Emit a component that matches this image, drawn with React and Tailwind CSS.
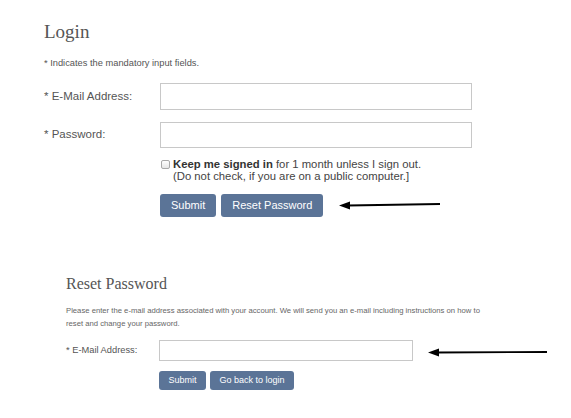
import React from "react";

const SANS = { fontFamily: '"Liberation Sans", Arial, sans-serif' };
const SERIF = { fontFamily: '"Liberation Serif", "Times New Roman", serif' };

const Arrow = ({ x1, y1, x2, y2 }) => (
  <svg
    className="absolute left-0 top-0 pointer-events-none"
    width="571"
    height="418"
    viewBox="0 0 571 418"
  >
    <line x1={x1 + 9} y1={y1} x2={x2} y2={y2} stroke="#000" strokeWidth="1.8" />
    <polygon points={`${x1},${y1} ${x1 + 11},${y1 - 4} ${x1 + 11},${y1 + 4}`} fill="#000" />
  </svg>
);

const Button = ({ children, small }) => (
  <button
    className={
      small
        ? "h-[19px] px-[9.5px] rounded-[3px] bg-[#5b7497] text-white text-[9px] leading-none"
        : "h-[23px] px-[11px] rounded-[3px] bg-[#5b7497] text-white text-[11px] leading-none"
    }
    style={SANS}
  >
    {children}
  </button>
);

export default function App() {
  return (
    <div className="relative w-[571px] h-[418px] bg-white overflow-hidden" style={SANS}>
      {/* Login form */}
      <div className="flex flex-col pl-[44px] pt-[20px]">
        <h1 className="text-[19px] leading-[24px] text-[#555]" style={SERIF}>
          Login
        </h1>
        <p className="mt-[13px] text-[9.3px] leading-[12px] text-[#555]">
          * Indicates the mandatory input fields.
        </p>

        <div className="mt-[14px] flex items-center">
          <label className="w-[116px] text-[11.5px] text-[#555]">* E-Mail Address:</label>
          <input className="w-[312px] h-[27px] border border-[#c8c8c8] outline-none" />
        </div>
        <div className="mt-[12px] flex items-center">
          <label className="w-[116px] text-[11.5px] text-[#555]">* Password:</label>
          <input type="password" className="w-[312px] h-[26px] border border-[#c8c8c8] outline-none" />
        </div>

        <div className="mt-[10px] ml-[116px] flex items-start">
          <span className="mt-[2px] ml-[1px] w-[9px] h-[9px] border border-[#a9a9a9] rounded-[2px] bg-gradient-to-b from-[#fff] to-[#e6e6e6]" />
          <div className="ml-[3px] text-[11.3px] leading-[12px] text-[#444]">
            <div>
              <b className="text-[#333]">Keep me signed in</b> for 1 month unless I sign out.
            </div>
            <div>(Do not check, if you are on a public computer.]</div>
          </div>
        </div>

        <div className="mt-[12px] ml-[116px] flex gap-[5px]">
          <Button>Submit</Button>
          <Button>Reset Password</Button>
        </div>
      </div>

      {/* Reset password form */}
      <div className="flex flex-col pl-[66px] pt-[57px]">
        <h2 className="text-[16px] leading-[20px] text-[#555]" style={SERIF}>
          Reset Password
        </h2>
        <p className="mt-[10px] text-[7.7px] leading-[13px] text-[#666]">
          Please enter the e-mail address associated with your account. We will send you an e-mail including instructions on how to
          <br />
          reset and change your password.
        </p>
        <div className="mt-[10px] flex items-center">
          <label className="w-[93px] text-[9.3px] text-[#555]">* E-Mail Address:</label>
          <input className="w-[254px] h-[21px] border border-[#c8c8c8] outline-none" />
        </div>
        <div className="mt-[10px] ml-[93px] flex gap-[4px]">
          <Button small>Submit</Button>
          <Button small>Go back to login</Button>
        </div>
      </div>

      <Arrow x1={339} y1={205.5} x2={440} y2={204} />
      <Arrow x1={428} y1={352.5} x2={547} y2={352} />
    </div>
  );
}
